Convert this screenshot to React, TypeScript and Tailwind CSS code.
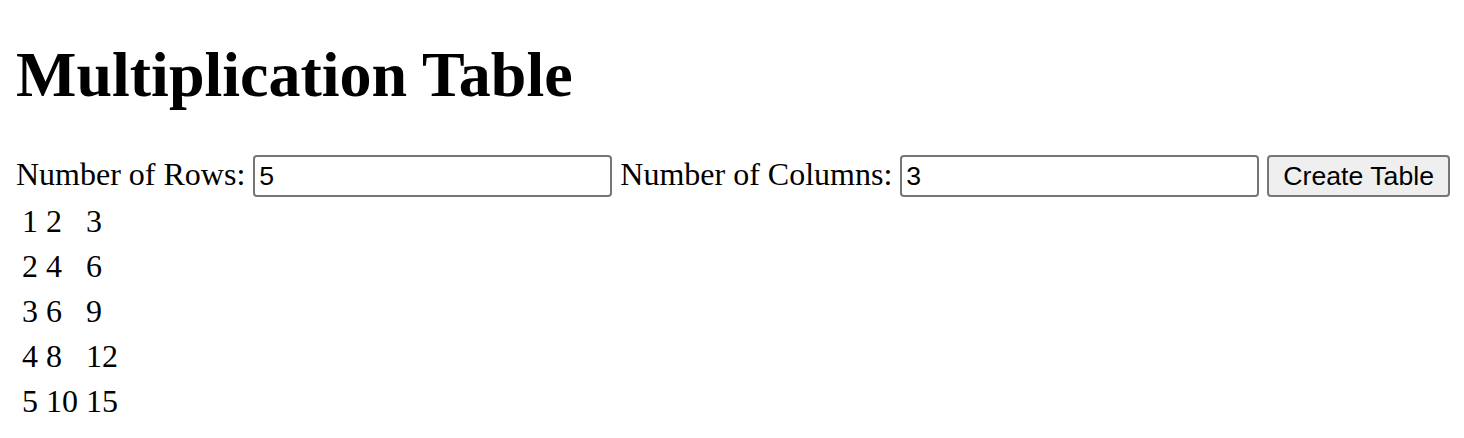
import React, { useState } from 'react';

const App: React.FC = () => {
  const [rows, setRows] = useState('5');
  const [cols, setCols] = useState('3');
  const [table, setTable] = useState({ rows: 5, cols: 3 });

  const createTable = () => {
    setTable({ rows: parseInt(rows) || 0, cols: parseInt(cols) || 0 });
  };

  return (
    <div className="m-4 text-[32px] leading-[normal] text-black font-['Liberation_Serif',serif]">
      <h1 className="text-[64px] leading-[normal] font-bold mt-[38px] mb-[43px]">Multiplication Table</h1>

      <div className="whitespace-nowrap">
        Number of Rows:{' '}
        <input
          type="text"
          value={rows}
          onChange={(e) => setRows(e.target.value)}
          className="w-[359px] h-[42px] px-[4px] py-[2px] border-2 border-[#767676] rounded-[4px] text-[26.67px] leading-[normal] font-['Liberation_Sans',Arial,sans-serif] bg-white"
        />{' '}
        Number of Columns:{' '}
        <input
          type="text"
          value={cols}
          onChange={(e) => setCols(e.target.value)}
          className="w-[359px] h-[42px] px-[4px] py-[2px] border-2 border-[#767676] rounded-[4px] text-[26.67px] leading-[normal] font-['Liberation_Sans',Arial,sans-serif] bg-white"
        />{' '}
        <button
          onClick={createTable}
          className="h-[42px] px-[14px] py-[2px] border-2 border-[#767676] rounded-[4px] bg-[#efefef] text-[26.67px] leading-[normal] font-['Liberation_Sans',Arial,sans-serif]"
        >
          Create Table
        </button>
      </div>

      <table className="border-separate border-spacing-[4px]">
        <tbody>
          {Array.from({ length: table.rows }, (_, r) => (
            <tr key={r}>
              {Array.from({ length: table.cols }, (_, c) => (
                <td key={c} className="p-[2px]">
                  {(r + 1) * (c + 1)}
                </td>
              ))}
            </tr>
          ))}
        </tbody>
      </table>
    </div>
  );
};

export default App;
